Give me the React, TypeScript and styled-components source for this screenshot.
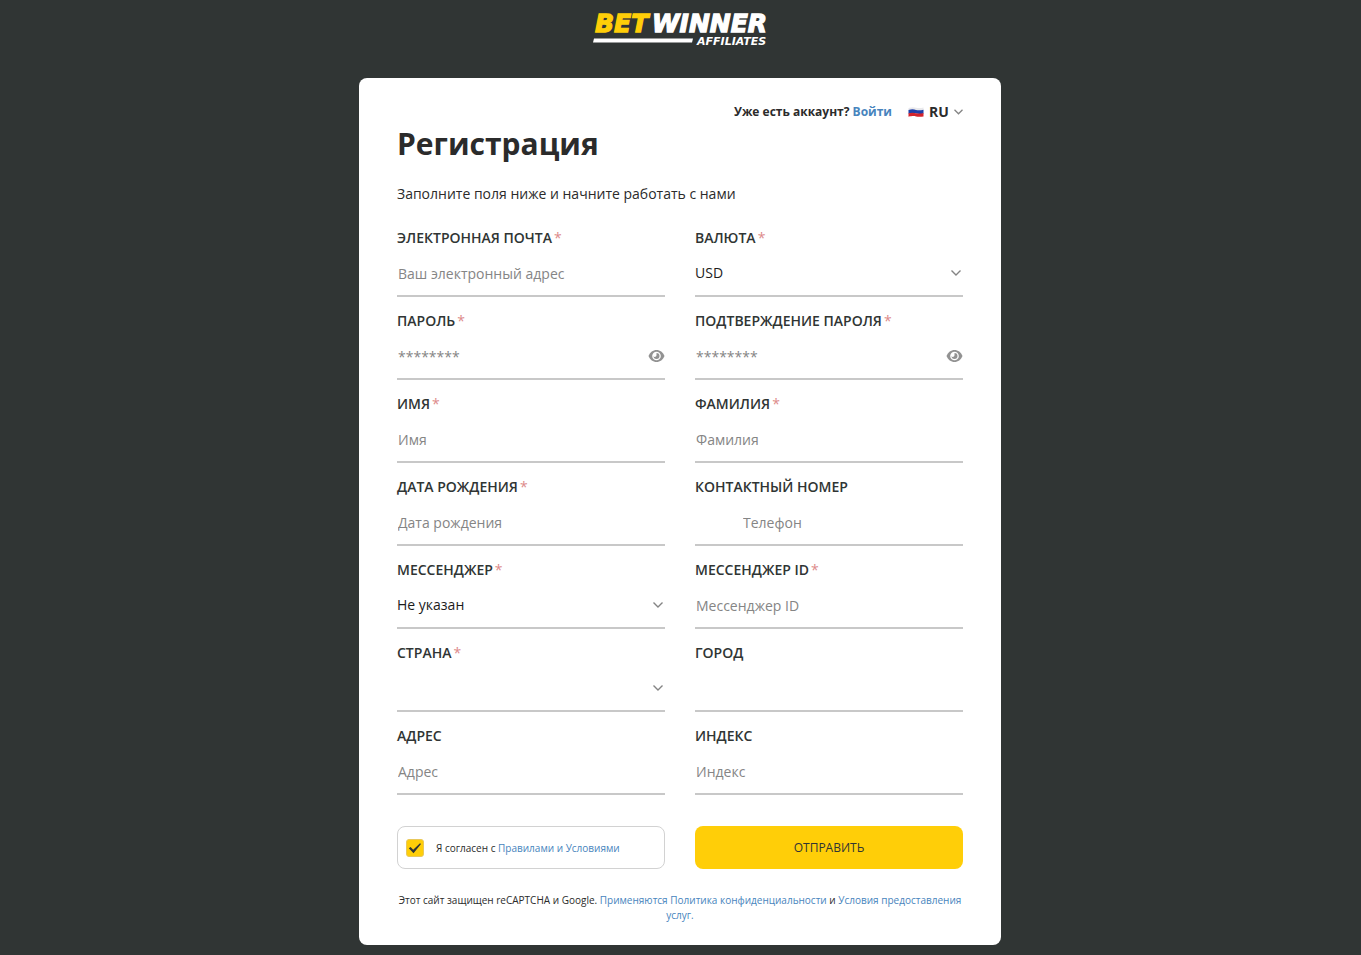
import React, { useId, useState } from "react";
import styled, { createGlobalStyle, css } from "styled-components";

const GlobalStyle = createGlobalStyle`
  *, *::before, *::after { box-sizing: border-box; }
  body {
    margin: 0;
    background: #303534;
    color: #2b2b2b;
    font-family: "Open Sans", "Noto Sans", sans-serif;
    font-size: 14px;
    line-height: 20px;
  }
`;

const Page = styled.div`
  display: flex;
  flex-direction: column;
  align-items: center;
  padding: 0 17px 10px 16px;
`;

const LogoLink = styled.a`
  display: block;
  padding: 8px 0 26px;
  svg { display: block; }
`;

const Card = styled.main`
  width: 100%;
  max-width: 642px;
  padding: 22px 38px;
  border-radius: 8px;
  background: #fff;
`;

const TopBar = styled.div`
  display: flex;
  justify-content: flex-end;
  align-items: center;
  gap: 16px;
  height: 24px;
  font-size: 12px;
  font-weight: 700;
`;

const Link = styled.a`
  color: #4784bd;
  text-decoration: none;
`;

const Language = styled.div`
  display: flex;
  align-items: center;
  gap: 5px;
`;

const LanguageSelect = styled.select`
  appearance: none;
  margin: 0;
  padding: 0;
  border: 0;
  background: transparent;
  color: #2b2b2b;
  font: 700 14px/20px "Open Sans", sans-serif;
`;

const Title = styled.h1`
  margin: 2px 0 22px;
  font-size: 30px;
  line-height: 36px;
  font-weight: 700;
`;

const Intro = styled.p`
  margin: 0 0 24px;
`;

const Grid = styled.div`
  display: grid;
  grid-template-columns: repeat(2, minmax(0, 1fr));
  gap: 14px 30px;
`;

const FieldBox = styled.div`
  display: flex;
  flex-direction: column;
`;

const Label = styled.label`
  font-weight: 600;
  color: #303534;
  text-transform: uppercase;
`;

const Star = styled.span`
  margin-left: 2px;
  color: #dd8a8a;
  font-weight: 400;
`;

const Control = styled.div`
  display: flex;
  align-items: center;
  height: 49px;
  padding-top: 3px;
  border-bottom: 2px solid #c8c8c8;
`;

const controlText = css`
  appearance: none;
  flex: 1;
  min-width: 0;
  border: 0;
  outline: 0;
  margin: 0;
  background: transparent;
  font: 400 14px/20px "Open Sans", sans-serif;
  color: #1c1c1c;
`;

const Input = styled.input<{ $indent?: number }>`
  ${controlText}
  padding: 1px 0 0 ${(p) => p.$indent ?? 1}px;
  &::placeholder { color: #858585; opacity: 1; }
`;

const Select = styled.select`
  ${controlText}
  padding: 0 20px 0 0;
  margin-right: -14px;
`;

const ChevronSvg = styled.svg`
  flex: none;
  margin-right: 1px;
  pointer-events: none;
`;

const EyeButton = styled.button`
  flex: none;
  display: flex;
  padding: 0;
  border: 0;
  background: transparent;
  cursor: pointer;
`;

const Actions = styled.div`
  display: grid;
  grid-template-columns: repeat(2, minmax(0, 1fr));
  column-gap: 30px;
  margin-top: 31px;
`;

const Agreement = styled.div`
  display: flex;
  align-items: center;
  gap: 12px;
  height: 43px;
  padding: 0 8px;
  border: 1px solid #d2d2d2;
  border-radius: 8px;
  font-size: 10px;
`;

const TickWrap = styled.span`
  display: grid;
  width: 18px;
  height: 18px;
  > * { grid-area: 1 / 1; }
  svg { pointer-events: none; }
`;

const Tick = styled.input`
  appearance: none;
  width: 18px;
  height: 18px;
  margin: 0;
  border: 1px solid #e8c85c;
  border-radius: 3px;
  background: #fff;
  &:checked { background: #ffce08; }
`;

const Submit = styled.button`
  height: 43px;
  border: 0;
  border-radius: 8px;
  background: #ffce08;
  color: #303534;
  font: 500 12px/20px "Open Sans", sans-serif;
  text-transform: uppercase;
  cursor: pointer;
`;

const Note = styled.p`
  margin: 24px 0 0;
  font-size: 10px;
  line-height: 15px;
  text-align: center;
`;

const Logo = () => (
  <svg width="176" height="44" viewBox="0 0 176 44" role="img" aria-label="BetWinner Affiliates">
    <g fontFamily="DejaVu Sans, sans-serif" fontStyle="italic" fontWeight="700">
      <text x="3" y="24" fontSize="25" fill="#ffce08" stroke="#ffce08" strokeWidth="1.3">BET</text>
      <text x="60" y="24" fontSize="25" fill="#fff" stroke="#fff" strokeWidth="1.3">WINNER</text>
      <text x="105" y="37" fontSize="11" fill="#fff">AFFILIATES</text>
    </g>
    <path d="M2 30.5H101L100 34.5H1Z" fill="#fff" />
  </svg>
);

const Flag = () => (
  <svg width="16" height="10" viewBox="0 0 16 10" aria-hidden="true">
    <path d="M.5 1C4-.2 6 .2 8 .7S12.500 1.300 15.500.4V3.500C12 4.300 10 4 8 3.500S4 3 .5 4Z" fill="#e9e9ec" />
    <path d="M.5 3C4 1.900 6 2.400 8 2.900S12 3.500 15.500 2.700V6.400C12 7.200 10 6.900 8 6.400S4 5.900.5 6.800Z" fill="#1f3fa8" />
    <path d="M.5 6.300C4 5.300 6 5.700 8 6.200S12 6.800 15.500 6V9.400C12 10 10 9.800 8 9.400S4 8.900.5 9.800Z" fill="#d3232c" />
  </svg>
);

const Chevron = () => (
  <ChevronSvg width="12" height="8" viewBox="0 0 12 8" aria-hidden="true">
    <path d="M1.500 1.500L6 6L10.500 1.500" fill="none" stroke="#848484" strokeWidth="1.400" />
  </ChevronSvg>
);

const SmallChevron = () => (
  <svg width="9" height="6" viewBox="0 0 9 6" aria-hidden="true">
    <path d="M.5.8L4.500 4.800L8.500.8" fill="none" stroke="#848484" strokeWidth="1.300" />
  </svg>
);

const Eye = () => (
  <svg width="17" height="14" viewBox="0 0 17 14" aria-hidden="true">
    <path d="M.5 7C2 3.200 5 1 8.500 1S15 3.200 16.500 7C15 10.800 12 13 8.500 13S2 10.800.5 7Z" fill="#929292" />
    <circle cx="8.500" cy="7" r="4.300" fill="#fff" />
    <path d="M8.500 4A3 3 0 1 1 5.500 7A1.600 1.600 0 0 0 8.500 6Z" fill="#929292" />
  </svg>
);

type FieldProps = {
  label: string;
  required?: boolean;
  placeholder?: string;
  type?: string;
  options?: string[];
  indent?: number;
};

function Field({ label, required, placeholder, type = "text", options, indent }: FieldProps) {
  const id = useId();
  const [shown, setShown] = useState(false);
  const isPassword = type === "password";
  return (
    <FieldBox>
      <Label htmlFor={id}>
        {label}
        {required && <Star>*</Star>}
      </Label>
      <Control>
        {options ? (
          <>
            <Select id={id}>
              {options.map((o) => (
                <option key={o}>{o}</option>
              ))}
            </Select>
            <Chevron />
          </>
        ) : (
          <Input id={id} type={isPassword && shown ? "text" : type} placeholder={placeholder} $indent={indent} />
        )}
        {isPassword && (
          <EyeButton type="button" aria-label="Показать пароль" onClick={() => setShown(!shown)}>
            <Eye />
          </EyeButton>
        )}
      </Control>
    </FieldBox>
  );
}

const fields: FieldProps[] = [
  { label: "Электронная почта", required: true, type: "email", placeholder: "Ваш электронный адрес" },
  { label: "Валюта", required: true, options: ["USD"] },
  { label: "Пароль", required: true, type: "password", placeholder: "********" },
  { label: "Подтверждение пароля", required: true, type: "password", placeholder: "********" },
  { label: "Имя", required: true, placeholder: "Имя" },
  { label: "Фамилия", required: true, placeholder: "Фамилия" },
  { label: "Дата рождения", required: true, placeholder: "Дата рождения" },
  { label: "Контактный номер", type: "tel", placeholder: "Телефон", indent: 48 },
  { label: "Мессенджер", required: true, options: ["Не указан"] },
  { label: "Мессенджер ID", required: true, placeholder: "Мессенджер ID" },
  { label: "Страна", required: true, options: [""] },
  { label: "Город" },
  { label: "Адрес", placeholder: "Адрес" },
  { label: "Индекс", placeholder: "Индекс" },
];

export default function App() {
  const [agreed, setAgreed] = useState(true);
  return (
    <>
      <GlobalStyle />
      <Page>
        <LogoLink href="#">
          <Logo />
        </LogoLink>
        <Card>
          <TopBar>
            <span>
              Уже есть аккаунт? <Link href="#login">Войти</Link>
            </span>
            <Language>
              <Flag />
              <LanguageSelect aria-label="Язык">
                <option>RU</option>
              </LanguageSelect>
              <SmallChevron />
            </Language>
          </TopBar>
          <Title>Регистрация</Title>
          <Intro>Заполните поля ниже и начните работать с нами</Intro>
          <form onSubmit={(e) => e.preventDefault()}>
            <Grid>
              {fields.map((f) => (
                <Field key={f.label} {...f} />
              ))}
            </Grid>
            <Actions>
              <Agreement>
                <TickWrap>
                  <Tick id="agree" type="checkbox" checked={agreed} onChange={() => setAgreed(!agreed)} />
                  {agreed && (
                    <svg width="18" height="18" viewBox="0 0 18 18" aria-hidden="true">
                      <path d="M2.800 9.200L4.600 8L7.200 10.800L14 4.300L15 5L7.500 14.200Z" fill="#303534" />
                    </svg>
                  )}
                </TickWrap>
                <label htmlFor="agree">
                  Я согласен с <Link href="#terms">Правилами и Условиями</Link>
                </label>
              </Agreement>
              <Submit type="submit">Отправить</Submit>
            </Actions>
          </form>
          <Note>
            Этот сайт защищен reCAPTCHA и Google.{" "}
            <Link href="#privacy">Применяются Политика конфиденциальности</Link> и{" "}
            <Link href="#service">Условия предоставления услуг.</Link>
          </Note>
        </Card>
      </Page>
    </>
  );
}
